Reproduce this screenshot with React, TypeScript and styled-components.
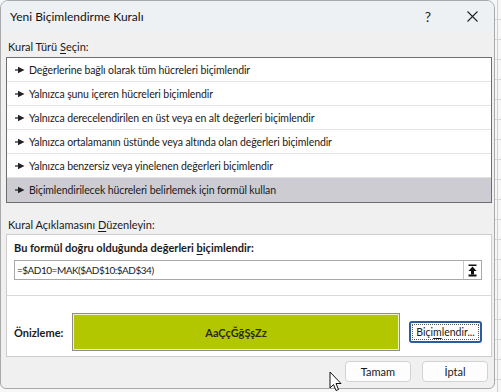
import React from "react";
import styled, { createGlobalStyle } from "styled-components";

const GlobalStyle = createGlobalStyle`
  html, body { margin: 0; padding: 0; }
  body {
    width: 501px;
    height: 392px;
    overflow: hidden;
    font-family: Lato, "Noto Sans", sans-serif;
    background-color: #f7f7f7;
    background-image:
      repeating-linear-gradient(to bottom, transparent 0 19px, #d6d6d6 19px 20px),
      repeating-linear-gradient(to right, transparent 0 497px, #cfcfcf 497px 498px);
  }
`;

const Screen = styled.div`
  position: relative;
  width: 501px;
  height: 392px;
`;

const Dialog = styled.div`
  width: 495px;
  height: 389px;
  box-sizing: border-box;
  border: 1px solid #a9a9a9;
  border-radius: 8px 8px 6px 6px;
  background: #f0f0f0;
  display: flex;
  flex-direction: column;
  overflow: hidden;
  color: #1a1a1a;
  font-size: 11px;
`;

const TitleBar = styled.div`
  height: 30px;
  flex: none;
  background: #eef1f4;
  display: flex;
  align-items: center;
  padding-left: 9px;
  font-size: 12px;
  color: #111;
`;

const Title = styled.div`
  flex: 1;
`;

const TitleButton = styled.div`
  width: 44px;
  height: 30px;
  display: flex;
  align-items: center;
  justify-content: center;
  font-size: 14px;
  color: #222;
`;

const Body = styled.div`
  display: flex;
  flex-direction: column;
  padding: 0 2px 0 5px;
`;

const SectionLabel = styled.div<{ $top: number }>`
  margin-top: ${(p) => p.$top}px;
  line-height: 14px;
  height: 14px;
  margin-bottom: 2px;
  padding-left: 2px;
`;

const Mn = styled.span`
  text-decoration: underline;
  text-underline-offset: 2px;
`;

const ListBox = styled.div`
  border: 1px solid #6e6e6e;
  background: #fff;
  display: flex;
  flex-direction: column;
  margin-top: 1px;
`;

const Row = styled.div<{ $selected?: boolean }>`
  height: 23px;
  display: flex;
  align-items: center;
  gap: 4px;
  padding-left: 8px;
  font-size: 10.5px;
  letter-spacing: -0.1px;
  background: ${(p) => (p.$selected ? "#cdccd3" : "#fff")};
  border-bottom: 1px solid ${(p) => (p.$selected ? "transparent" : "#e4e4e4")};
  &:last-child { border-bottom: none; height: 24px; }
`;

const ArrowIcon = () => (
  <svg width="10" height="8" viewBox="0 0 10 8">
    <rect x="0" y="3.4" width="4" height="1.2" fill="#222" />
    <polygon points="3,0.8 9.5,4 3,7.2" fill="#222" />
  </svg>
);

const Panel = styled.div`
  background: #fff;
  border: 1px solid #cdcdcd;
  display: flex;
  flex-direction: column;
`;

const PanelTop = styled.div`
  padding: 6px 9px 15px 7px;
  border-bottom: 1px solid #d9d9d9;
  display: flex;
  flex-direction: column;
`;

const BoldLabel = styled.div`
  font-weight: 700;
  line-height: 14px;
  margin-bottom: 5px;
`;

const InputBox = styled.div`
  height: 20px;
  box-sizing: border-box;
  border: 1px solid #a8a8a8;
  display: flex;
  align-items: center;
  padding-left: 2px;
`;

const InputText = styled.div`
  flex: 1;
  font-size: 10px;
  letter-spacing: -0.5px;
`;

const CollapseButton = styled.div`
  width: 18px;
  height: 18px;
  box-sizing: border-box;
  border-left: 1px solid #c8c8c8;
  display: flex;
  align-items: center;
  justify-content: center;
`;

const PreviewRow = styled.div`
  display: flex;
  align-items: center;
  padding: 17px 9px 5px 7px;
`;

const PreviewLabel = styled.div`
  font-weight: 700;
  width: 58px;
`;

const PreviewBox = styled.div`
  width: 329px;
  height: 38px;
  box-sizing: border-box;
  border: 1px solid #8d8d8d;
  box-shadow: inset 0 0 0 1px #eef3c8;
  background: #b3c700;
  display: flex;
  align-items: center;
  justify-content: center;
  font-size: 11px;
  font-weight: 700;
  color: #2b2b1a;
`;

const FocusButton = styled.div`
  margin-left: 9px;
  width: 73px;
  height: 22px;
  box-sizing: border-box;
  border: 2px solid #2a5d9f;
  border-radius: 3px;
  display: flex;
  align-items: center;
  justify-content: center;
  position: relative;
  background: #fff;
  font-size: 10.5px;
  &::after {
    content: "";
    position: absolute;
    inset: 1px;
    border: 1px dotted #555;
    border-radius: 1px;
  }
`;

const Footer = styled.div`
  display: flex;
  justify-content: flex-end;
  gap: 11px;
  padding: 4px 4px 0 0;
`;

const DialogButton = styled.div`
  width: 66px;
  height: 21px;
  box-sizing: border-box;
  border: 1px solid #d2d2d2;
  border-radius: 4px;
  background: #fdfdfd;
  display: flex;
  align-items: center;
  justify-content: center;
`;

const Cursor = styled.svg`
  position: absolute;
  left: 329px;
  top: 371px;
`;

const rows = [
  "Değerlerine bağlı olarak tüm hücreleri biçimlendir",
  "Yalnızca şunu içeren hücreleri biçimlendir",
  "Yalnızca derecelendirilen en üst veya en alt değerleri biçimlendir",
  "Yalnızca ortalamanın üstünde veya altında olan değerleri biçimlendir",
  "Yalnızca benzersiz veya yinelenen değerleri biçimlendir",
  "Biçimlendirilecek hücreleri belirlemek için formül kullan",
];

export default function App() {
  return (
    <Screen>
      <GlobalStyle />
      <Dialog>
        <TitleBar>
          <Title>Yeni Biçimlendirme Kuralı</Title>
          <TitleButton>?</TitleButton>
          <TitleButton>
            <svg width="11" height="11" viewBox="0 0 11 11">
              <path d="M0.5 0.5 L10.5 10.5 M10.5 0.5 L0.5 10.5" stroke="#222" strokeWidth="1.1" />
            </svg>
          </TitleButton>
        </TitleBar>
        <Body>
          <SectionLabel $top={9}>
            Kural Türü <Mn>S</Mn>eçin:
          </SectionLabel>
          <ListBox>
            {rows.map((r, i) => (
              <Row key={r} $selected={i === rows.length - 1}>
                <ArrowIcon />
                <span>{r}</span>
              </Row>
            ))}
          </ListBox>
          <SectionLabel $top={15}>
            Kural Açıklamasını <Mn>D</Mn>üzenleyin:
          </SectionLabel>
          <Panel>
            <PanelTop>
              <BoldLabel>
                Bu formül doğru olduğunda değerleri <Mn>b</Mn>içimlendir:
              </BoldLabel>
              <InputBox>
                <InputText>=$AD10=MAK($AD$10:$AD$34)</InputText>
                <CollapseButton>
                  <svg width="11" height="13" viewBox="0 0 11 13">
                    <rect x="1.5" y="0.5" width="8" height="1.5" fill="#111" />
                    <polygon points="5.5,2.5 1.5,7 9.5,7" fill="#111" />
                    <rect x="4" y="7" width="3" height="3.5" fill="#111" />
                    <rect x="1.5" y="10.5" width="8" height="2" fill="#111" />
                  </svg>
                </CollapseButton>
              </InputBox>
            </PanelTop>
            <PreviewRow>
              <PreviewLabel>Önizleme:</PreviewLabel>
              <PreviewBox>AaÇçĞğŞşZz</PreviewBox>
              <FocusButton>
                <span>
                  Biçi<Mn>m</Mn>lendir...
                </span>
              </FocusButton>
            </PreviewRow>
          </Panel>
          <Footer>
            <DialogButton>Tamam</DialogButton>
            <DialogButton>İptal</DialogButton>
          </Footer>
        </Body>
      </Dialog>
      <Cursor width="13" height="21" viewBox="0 0 13 21">
        <path d="M1 1 L1 17 L4.5 13.5 L7 19.5 L9.5 18.5 L7 12.5 L12 12.5 Z" fill="#fff" stroke="#111" strokeWidth="1" />
      </Cursor>
    </Screen>
  );
}
